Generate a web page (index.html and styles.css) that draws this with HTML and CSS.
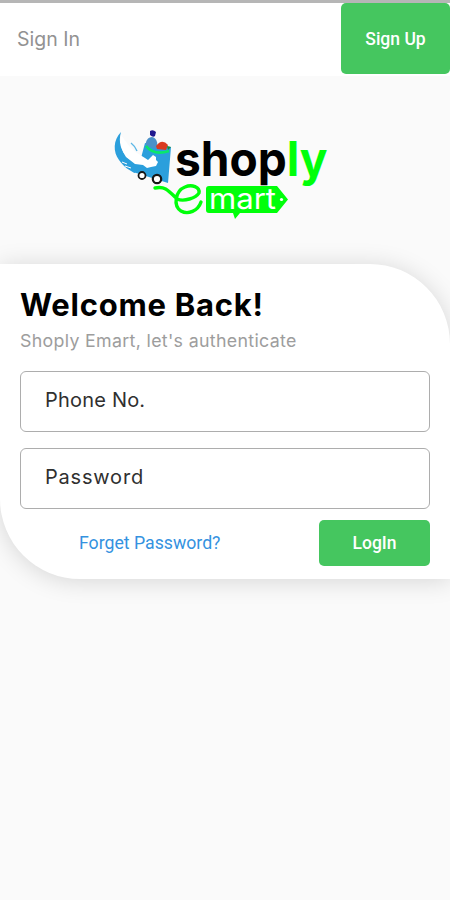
FILE: index.html
```html
<!DOCTYPE html>
<html lang="en">
<head>
 <meta charset="UTF-8">
 <meta name="viewport" content="width=device-width, initial-scale=1.0">
 <title>Shoply Emart</title>
 <link rel="stylesheet" href="styles.css">
</head>
<body>
 <header class="topbar">
 <a class="tab">Sign In</a>
 <button class="btn signup">Sign Up</button>
 </header>

 <div class="logo">
 <svg width="220" height="100" viewBox="110 124 220 100" role="img" aria-label="Shoply Emart">
 <!-- cart -->
 <path d="M145 143 L171 147 L168 183 L133 172 L136 164 L141 158Z" fill="#2b9fdc"/>
 <!-- arm -->
 <path d="M121 132 C113 140 113 152 119 160 C124 167 130 171 135 173 L139 165 L128 158 C121 151 118 142 121 132Z" fill="#2b9fdc"/>
 <path d="M122 162 L127 164 M125 166 L131 168" stroke="#fff" stroke-width="1"/>
 <path d="M131 143 Q135 146 137 151" fill="none" stroke="#5cb7e6" stroke-width="1.400"/>
 <!-- hand -->
 <path d="M121 135 L130 147 Q137 154 145 158 L148 160 L153 155 L156 157 L156 160 L158 162 L156 166 L151 167 L147 168 L143 165 L135 164 L126 157 Q119 147 121 135Z" fill="#fff"/>
 <!-- groceries -->
 <path d="M146 146 C145 141 148 137 152 137 C157 138 158 143 157 149Z" fill="#4b91c9"/>
 <path d="M150 131 Q153 129 156 132 L155 136 Q153 138 150 135Z" fill="#20188f"/>
 <path d="M156 146 Q162 138 168 145 L166 150 L157 149Z" fill="#d93a20"/>
 <path d="M167 146 L171 147 L168 150Z" fill="#188c36"/>
 <path d="M146 146 Q154 156 169 151" fill="none" stroke="#08e86a" stroke-width="2.800"/>
 <circle cx="142" cy="175.500" r="3.500" fill="#fff" stroke="#171717" stroke-width="1.800"/>
 <circle cx="157" cy="179" r="4.200" fill="#fff" stroke="#171717" stroke-width="2.200"/>
 <text class="wordmark" x="175" y="176" textLength="152.500" lengthAdjust="spacingAndGlyphs">shop<tspan class="green">ly</tspan></text>
 <!-- cart handle running into the big e -->
 <path d="M155 188 C165 186 168 190 177 199 C184 202 196 198 199 193 C200 187 192 184 185 187 C175 191 173 206 181 211 C188 215 198 211 201 202" fill="none" stroke="#00ff0a" stroke-width="3.400" stroke-linecap="round"/>
 <!-- price tag -->
 <path d="M209 186 H277 L288 199.500 L277 213 H240 L235 219 L233 213 H209 Q206 213 206 210 V189 Q206 186 209 186Z" fill="#00ff0a"/>
 <text class="tag-text" x="209" y="209" textLength="67" lengthAdjust="spacingAndGlyphs">mart</text>
 <circle cx="281.500" cy="199.500" r="1.600" fill="#fff"/>
 </svg>
 </div>

 <main class="card">
 <h1 class="title">Welcome Back!</h1>
 <p class="subtitle">Shoply Emart, let's authenticate</p>
 <div class="field phone">Phone No.</div>
 <div class="field password">Password</div>
 <div class="actions">
 <a class="forgot">Forget Password?</a>
 <button class="btn login">LogIn</button>
 </div>
 </main>
</body>
</html>
```

FILE: styles.css
```css
* {
box-sizing: border-box;
}
body {
margin: 0;
min-height: 900px;
background: #fafafa;
font-family: Inter, "Open Sans", sans-serif;
overflow-x: hidden;
}
.topbar {
display: flex;
justify-content: space-between;
align-items: flex-start;
height: 76px;
border-top: 3px solid #b6b6b6;
background: #fff;
}
.tab {
padding: 24px 0 0 17px;
font-size: 19.5px;
line-height: 24px;
color: #929292;
}
.btn {
border: 0;
border-radius: 5px;
background: #45c65f;
color: #fff;
font-family: Roboto, sans-serif;
font-weight: 500;
font-size: 17.5px;
padding: 0;
}
.signup {
width: 109px;
height: 71px;
}
.logo {
height: 188px;
padding: 48px 0 0 110px;
}
.wordmark {
font-family: Inter, sans-serif;
font-weight: 700;
font-size: 48px;
fill: #000;
}
.green {
fill: #00ff0a;
}
.tag-text {
font-family: Inter, sans-serif;
font-weight: 400;
font-size: 29px;
fill: #fff;
}
.card {
height: 315px;
padding: 24px 20px 0;
background: #fff;
border-radius: 0 80px 0 80px;
box-shadow: 0 2px 24px rgba(0,0,0,0.15);
}
.title {
margin: 0;
font-size: 31px;
line-height: 34px;
font-weight: 700;
letter-spacing: 0.75px;
color: #000;
white-space: nowrap;
}
.subtitle {
margin: 7px 0 0;
font-size: 17.8px;
line-height: 24px;
letter-spacing: 0.32px;
color: #9d9d9d;
white-space: nowrap;
}
.field {
display: flex;
align-items: center;
height: 61px;
margin-top: 18px;
padding: 0 24px 3px;
border: 1px solid #adadad;
border-radius: 6px;
font-size: 20px;
color: #303030;
}
.phone {
letter-spacing: 0.2px;
}
.password {
margin-top: 16px;
letter-spacing: 0.8px;
}
.actions {
display: flex;
justify-content: space-between;
align-items: center;
margin-top: 11px;
padding-left: 59px;
}
.forgot {
font-family: Roboto, sans-serif;
font-size: 17.7px;
color: #3492df;
}
.login {
width: 111px;
height: 46px;
}
```
